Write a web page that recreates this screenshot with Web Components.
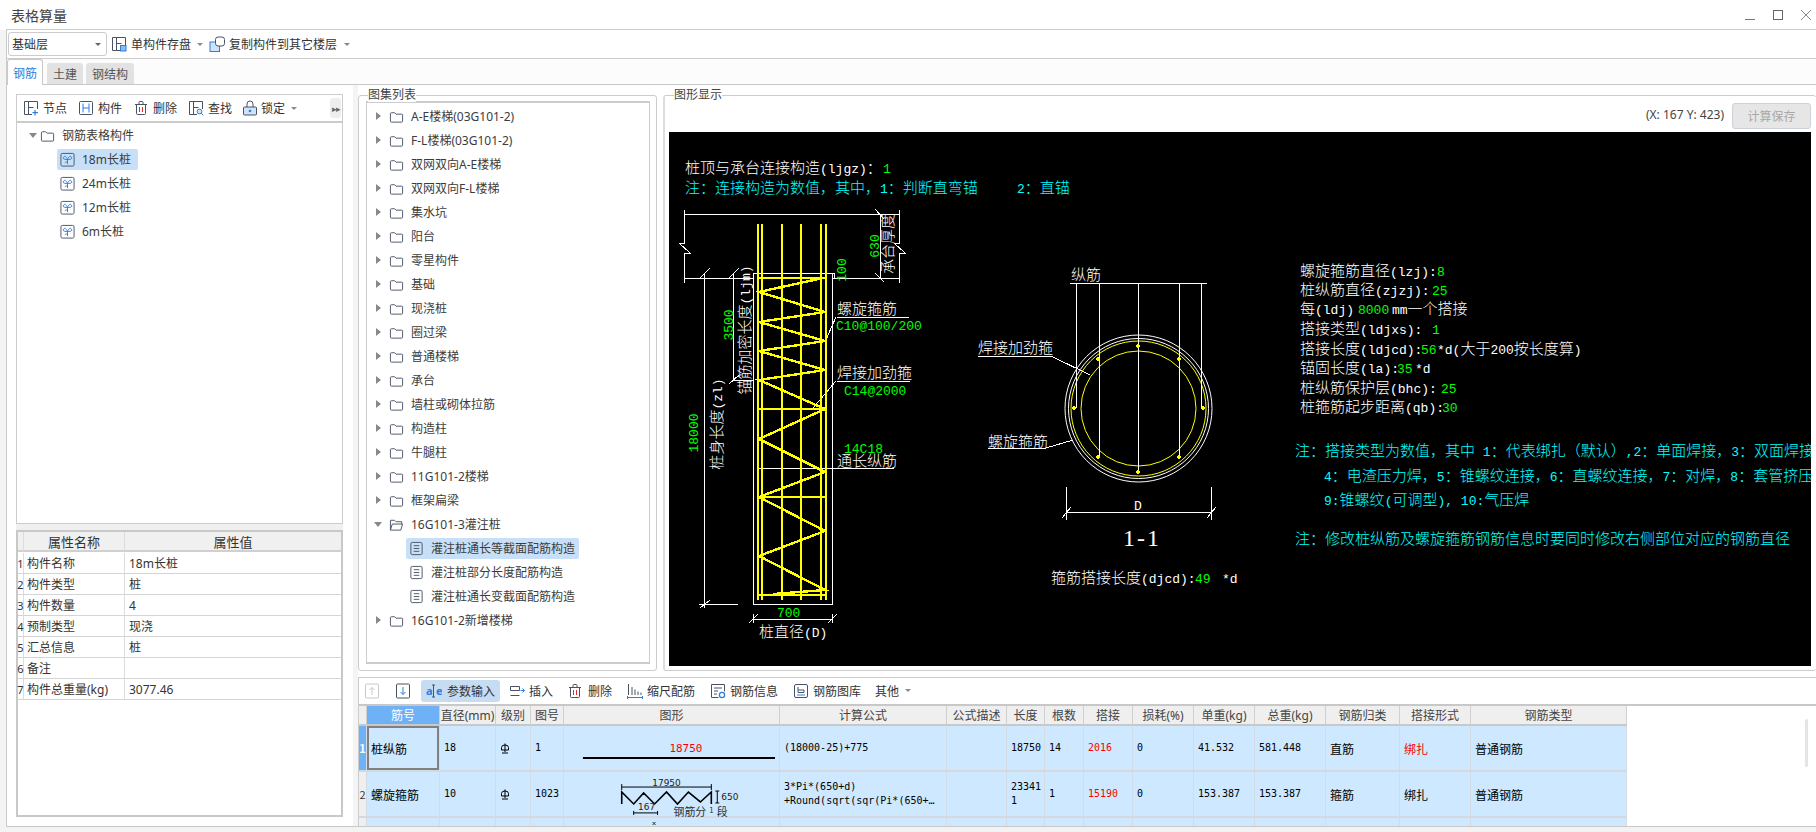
<!DOCTYPE html>
<html lang="zh-CN">
<head>
<meta charset="utf-8">
<title>表格算量</title>
<style>
  html, body { margin: 0; height: 100%; background: #fff; overflow: hidden; }
  body { font: 12px "Noto Sans", "Noto Sans CJK SC", sans-serif; color: #333; }
</style>
</head>
<body>
<app-shell>
  <title-bar slot="title">表格算量</title-bar>
  <floor-bar slot="floor"></floor-bar>
  <tab-strip slot="tabs"></tab-strip>
  <left-pane slot="left"></left-pane>
  <group-box slot="list" label="图集列表"><atlas-tree></atlas-tree></group-box>
  <group-box slot="graph" label="图形显示" flush><graph-view></graph-view></group-box>
  <rebar-panel slot="bottom"></rebar-panel>
</app-shell>

<script>
const DARK = '#4a5364';
const BLUE = '#2a7fe0';
const FRAME = `<path d="M9 14.5H1.5v-13h13V9" fill="none" stroke="${DARK}"/>`;

const ICONS = {
  node: `${FRAME}<path d="M5.5 1.5v13M5.5 7.5h5" stroke="${DARK}" fill="none"/><path d="M12 10v5.5M9.5 12.7h5.5" stroke="${BLUE}" stroke-width="1.2" fill="none"/>`,
  part: `<rect x="1.5" y="1.5" width="13" height="13" rx="1" fill="none" stroke="${DARK}"/><path d="M5 3.5v9M11 3.5v9M5 8h6" stroke="${BLUE}" fill="none"/>`,
  del: `<path d="M3.5 4.5v9a1 1 0 001 1h7a1 1 0 001-1v-9M2 4.5h12M6 4.5v-2a1 1 0 011-1h2a1 1 0 011 1v2" stroke="${DARK}" fill="none"/><path d="M6.5 7v5M9.5 7v5" stroke="#e02a2a" fill="none"/>`,
  find: `${FRAME}<path d="M5.5 1.5v13M5.5 7.5h5" stroke="${DARK}" fill="none"/><circle cx="11.5" cy="11.5" r="2.4" fill="#cfe3fa" stroke="${BLUE}"/><path d="M13.2 13.2l2 2" stroke="${BLUE}" fill="none"/>`,
  lock: `<path d="M5 7V4a3 3 0 016 0v3" fill="none" stroke="${DARK}"/><rect x="1.5" y="7" width="13" height="8" rx="1" fill="#cfe3fa" stroke="${DARK}"/><circle cx="8" cy="11" r="1.3" fill="${BLUE}"/>`,
  save: `${FRAME}<path d="M5.5 1.5v13M5.5 7.5h5" stroke="${DARK}" fill="none"/><rect x="9.5" y="9.5" width="5.5" height="5.5" fill="#8dbcf0" stroke="${BLUE}"/>`,
  copy: `<rect x="1" y="6" width="9.5" height="9.5" fill="#cfe3fa" stroke="${BLUE}"/><rect x="6.5" y="1" width="9" height="9" rx="2.5" fill="#fff" stroke="${DARK}"/>`,
  pile: `<rect x="1" y="1.5" width="14" height="13.5" rx="1.5" fill="none" stroke="${DARK}"/><path d="M8 8C6 8 3.5 8 3.5 6.3S6 3 8 8zM8 8c2 0 4.500 0 4.500-1.700S10 3 8 8zM8 8v5M8 10.500c-1 0-2.500 0-2.500 1.200" fill="none" stroke="${BLUE}"/>`,
  folder: `<path d="M1.500 5a1 1 0 011-1h3.500l1.500 1.500h6a1 1 0 011 1v6.500a1 1 0 01-1 1h-11a1 1 0 01-1-1z" fill="none" stroke="${DARK}"/>`,
  folderOpen: `<path d="M1.500 14v-10.500h4.500l1.500 1.500h6v2.500M1.500 14l2-6.500h11l-2 6.500z" fill="none" stroke="${DARK}"/>`,
  doc: `<rect x="2" y="1.500" width="12" height="13" rx="1.500" fill="none" stroke="${DARK}"/><path d="M5 5h6M5 8h6M5 11h6" stroke="${DARK}" fill="none"/>`,
  up: `<rect x="1.500" y="1" width="13" height="14" rx="1" fill="none" stroke="#c8c8c8"/><path d="M8 12V4.500M5.500 7L8 4.500 10.500 7" stroke="#c8c8c8" fill="none"/>`,
  down: `<rect x="1.500" y="1" width="13" height="14" rx="1" fill="none" stroke="${DARK}"/><path d="M8 4v7.500M5.500 9L8 11.500 10.500 9" stroke="${BLUE}" fill="none"/>`,
  param: `<text x="0" y="12" font-family="Noto Sans" font-weight="700" font-size="11" fill="${BLUE}">a</text><text x="10" y="12" font-family="Noto Sans" font-weight="700" font-size="11" fill="${BLUE}">e</text><path d="M6 2h3M6 14h3M7.500 2v12" stroke="${DARK}" fill="none"/>`,
  insert: `<path d="M1.500 3.500h9v4h-9zM1.500 12.500h9" fill="none" stroke="${DARK}"/><path d="M11.500 7.500h4M13.500 5.500l2 2-2 2" fill="none" stroke="${BLUE}"/>`,
  scale: `<path d="M1.500 1v11M5 4v8M8 6.500v5.500M11 8.500v3.500M14 9.500v2.500" fill="none" stroke="${DARK}"/><path d="M.5 14.500h15M.5 13v3M15.500 13v3" fill="none" stroke="${BLUE}"/>`,
  info: `<path d="M8.500 14.500H1.500v-13h13v7" fill="none" stroke="${DARK}"/><path d="M4 5h8M4 8h4M4 11h3" stroke="${DARK}" fill="none"/><circle cx="12" cy="12" r="2.600" fill="none" stroke="${BLUE}" stroke-width="1.300"/>`,
  lib: `<rect x="1.500" y="1.500" width="13" height="13" rx="1.500" fill="none" stroke="${DARK}"/><path d="M5 4v5.500h6V7H5" fill="none" stroke="${DARK}"/><path d="M4 12h8" stroke="${BLUE}" fill="none"/>`
};

class UiIcon extends HTMLElement {
  connectedCallback() {
    const size = this.getAttribute('size') || 16;
    this.attachShadow({ mode: 'open' }).innerHTML = `
      <style>:host { display: inline-flex; flex: none; } svg { display: block; }</style>
      <svg width="${size}" height="${size}" viewBox="0 0 16 16">${ICONS[this.getAttribute('name')] || ''}</svg>`;
  }
}
customElements.define('ui-icon', UiIcon);

class ToolBtn extends HTMLElement {
  connectedCallback() {
    const gap = this.getAttribute('gap') || 4;
    const caret = this.getAttribute('caret');
    this.attachShadow({ mode: 'open' }).innerHTML = `
      <style>
        :host { display: inline-flex; align-items: center; gap: ${gap}px; height: 22px; flex: none; border-radius: 3px; color: #333; white-space: nowrap; }
        :host([active]) { background: #c5dcf2; padding: 0 5px; }
        .caret { width: 0; height: 0; border: 3px solid transparent; border-top: 3px solid #8a8a8a; border-bottom: 0; margin-left: ${caret || 0}px; }
      </style>
      <ui-icon name="${this.getAttribute('icon')}"></ui-icon><slot></slot>
      ${caret ? '<span class="caret"></span>' : ''}`;
  }
}
customElements.define('tool-btn', ToolBtn);

class AppShell extends HTMLElement {
  constructor() {
    super();
    this.attachShadow({ mode: 'open' }).innerHTML = `
      <style>
        :host { display: flex; flex-direction: column; width: 1816px; height: 832px; overflow: hidden; background: #f3f3f3; }
        .framed { margin-left: 6px; display: flex; flex-direction: column; flex: none; background: #fff; border-left: 1px solid #ccc; }
        .body { height: 741px; display: flex; border-bottom: 1px solid #c8c8c8; background: #fff; }
        .left { width: 336px; box-sizing: border-box; padding-left: 9px; flex: none; }
        .gutter { width: 15px; flex: none; background: linear-gradient(90deg, #fff 65%, #f4f4f4 65%); }
        .right { flex: 1; min-width: 0; display: flex; flex-direction: column; background: #f7f7f7; }
        .top { height: 592px; display: flex; gap: 6px; padding-top: 10px; box-sizing: border-box; flex: none; background: #fff; }
        .list { width: 299px; flex: none; display: flex; padding-bottom: 6px; }
        .graph { flex: 1; min-width: 0; display: flex; padding-bottom: 6px; }
      </style>
      <slot name="title"></slot>
      <div class="framed">
        <slot name="floor"></slot>
        <slot name="tabs"></slot>
        <div class="body">
          <div class="left"><slot name="left"></slot></div>
          <div class="gutter"></div>
          <div class="right">
            <div class="top">
              <div class="list"><slot name="list"></slot></div>
              <div class="graph"><slot name="graph"></slot></div>
            </div>
            <slot name="bottom"></slot>
          </div>
        </div>
      </div>`;
  }
}
customElements.define('app-shell', AppShell);

class TitleBar extends HTMLElement {
  constructor() {
    super();
    this.attachShadow({ mode: 'open' }).innerHTML = `
      <style>
        :host { display: block; height: 30px; flex: none; background: #fff; }
        .bar { height: 29px; margin-left: 6px; border-bottom: 1px solid #ccc; display: flex; align-items: center; padding-left: 5px; font-size: 14px; color: #444; }
        .win { margin-left: auto; display: flex; gap: 18px; padding-right: 5px; align-items: center; }
        svg { display: block; }
      </style>
      <div class="bar"><slot></slot>
        <div class="win">
          <svg width="10" height="10" viewBox="0 0 10 10"><path d="M0 9.500h10" stroke="#777"/></svg>
          <svg width="10" height="10" viewBox="0 0 10 10"><rect x=".5" y=".5" width="9" height="9" fill="none" stroke="#666"/></svg>
          <svg width="10" height="10" viewBox="0 0 10 10"><path d="M0 0l10 10M10 0L0 10" stroke="#888"/></svg>
        </div>
      </div>`;
  }
}
customElements.define('title-bar', TitleBar);

class FloorBar extends HTMLElement {
  constructor() {
    super();
    this.attachShadow({ mode: 'open' }).innerHTML = `
      <style>
        :host { display: flex; align-items: center; height: 28px; flex: none; border-bottom: 1px solid #ccc; }
        .combo { width: 99px; height: 24px; box-sizing: border-box; margin-left: 1px; border: 1px solid #ccc; border-radius: 3px; display: flex; align-items: center; padding: 0 5px 0 3px; justify-content: space-between; }
        .combo i { width: 0; height: 0; border: 3px solid transparent; border-top: 3px solid #666; border-bottom: 0; }
        tool-btn:first-of-type { margin-left: 4px; }
        tool-btn + tool-btn { margin-left: 6px; }
      </style>
      <div class="combo">基础层<i></i></div>
      <tool-btn icon="save" caret="2">单构件存盘</tool-btn>
      <tool-btn icon="copy" caret="3">复制构件到其它楼层</tool-btn>`;
  }
}
customElements.define('floor-bar', FloorBar);

class TabStrip extends HTMLElement {
  constructor() {
    super();
    this.attachShadow({ mode: 'open' }).innerHTML = `
      <style>
        :host { display: flex; align-items: flex-end; height: 25px; flex: none; border-bottom: 1px solid #c8c8c8; background: #fcfcfc; }
        .tab { height: 21px; padding: 0 6px; background: #e2e2e2; border-radius: 3px 3px 0 0; display: flex; align-items: center; margin-left: 3px; color: #555; }
        .on { margin: 0 4px -1px 0; width: 36px; height: 26px; padding: 0; justify-content: center; box-sizing: border-box; background: #fff; border: 1px solid #c8c8c8; border-bottom: 0; color: #2a7fe0; }
      </style>
      <div class="tab on">钢筋</div>
      <div class="tab" style="margin-left:0">土建</div>
      <div class="tab">钢结构</div>`;
  }
}
customElements.define('tab-strip', TabStrip);

class TreeRow extends HTMLElement {
  connectedCallback() {
    const level = this.getAttribute('level') || 'root';
    const arrow = this.getAttribute('arrow');
    const icon = this.getAttribute('icon');
    this.attachShadow({ mode: 'open' }).innerHTML = `
      <style>
        :host { display: flex; align-items: center; height: 24px; white-space: nowrap; color: #3c3c3c; }
        .root { display: flex; align-items: center; padding-left: var(--root-pad, 12px); }
        .arrow { width: 8px; height: 8px; margin-right: var(--arrow-gap, 3px); display: flex; align-items: center; justify-content: center; }
        .r { border-left: 5px solid #888; border-top: 4px solid transparent; border-bottom: 4px solid transparent; }
        .d { border-top: 5px solid #888; border-left: 4px solid transparent; border-right: 4px solid transparent; }
        .child { margin-left: var(--child-pad, 40px); height: 21px; display: flex; align-items: center; gap: 7px; padding: 0 var(--pill-end, 7px) 0 var(--pill-pad, 3px); border-radius: 2px; }
        :host([selected]) .child { background: #c8dff8; }
        .t { margin-left: 7px; }
        .child .t { margin-left: 0; }
      </style>
      ${level === 'root'
        ? `<div class="root"><span class="arrow"><i class="${arrow}"></i></span><ui-icon name="${icon}" size="15"></ui-icon><span class="t"><slot></slot></span></div>`
        : `<div class="child"><ui-icon name="${icon}" size="15"></ui-icon><span class="t"><slot></slot></span></div>`}`;
  }
}
customElements.define('tree-row', TreeRow);

class LeftPane extends HTMLElement {
  constructor() {
    super();
    const props = [['构件名称', '18m长桩'], ['构件类型', '桩'], ['构件数量', '4'], ['预制类型', '现浇'], ['汇总信息', '桩'], ['备注', ''], ['构件总重量(kg)', '3077.46']];
    this.attachShadow({ mode: 'open' }).innerHTML = `
      <style>
        :host { display: flex; flex-direction: column; width: 327px; padding-top: 9px; height: 732px; box-sizing: border-box; }
        .tools { height: 27px; box-sizing: border-box; border: 1px solid #ccc; border-bottom: 0; display: flex; align-items: center; padding-left: 6px; }
        .tools tool-btn + tool-btn { margin-left: 11px; }
        .more { margin-left: auto; margin-right: 1px; width: 11px; height: 20px; background: #eee; border-radius: 3px; color: #666; font-size: 9px; display: flex; align-items: center; justify-content: center; letter-spacing: -1px; }
        .tree { height: 403px; box-sizing: border-box; border: 1px solid #ccc; border-top: 2px solid #ccc; }
        .gap { height: 6px; background: #f0f0f0; flex: none; }
        .props { height: 287px; box-sizing: border-box; border: 2px solid #c8c8c8; display: grid; grid-template-columns: 6px 101px 1fr; grid-auto-rows: 21px; align-content: start; }
        .props div { border-right: 1px solid #dcdcdc; border-bottom: 1px solid #d4d4d4; box-sizing: border-box; display: flex; align-items: center; padding-left: 3px; overflow: visible; white-space: nowrap; }
        .props .h { background: #f0f0f0; justify-content: center; font-size: 13px; padding: 0; height: 20px; border-bottom: 2px solid #d0d0d0; }
        .props .n { padding: 0; justify-content: center; font-size: 11px; }
        .props div:nth-child(3n+3) { padding-left: 4px; border-right: 0; }
        .props .h:nth-child(3) { padding: 0; }
      </style>
      <div class="tools">
        <tool-btn icon="node">节点</tool-btn>
        <tool-btn icon="part">构件</tool-btn>
        <tool-btn icon="del">删除</tool-btn>
        <tool-btn icon="find">查找</tool-btn>
        <tool-btn icon="lock" gap="3" caret="3" style="margin-left:10px">锁定</tool-btn>
        <span class="more">▸▸</span>
      </div>
      <div class="tree">
        <tree-row arrow="d" icon="folder">钢筋表格构件</tree-row>
        <tree-row level="child" icon="pile" selected>18m长桩</tree-row>
        <tree-row level="child" icon="pile">24m长桩</tree-row>
        <tree-row level="child" icon="pile">12m长桩</tree-row>
        <tree-row level="child" icon="pile">6m长桩</tree-row>
      </div>
      <div class="gap"></div>
      <div class="props">
        <div class="h"></div><div class="h">属性名称</div><div class="h">属性值</div>
        ${props.map((p, i) => `<div class="n">${i + 1}</div><div>${p[0]}</div><div>${p[1]}</div>`).join('')}
      </div>`;
  }
}
customElements.define('left-pane', LeftPane);

class GroupBox extends HTMLElement {
  connectedCallback() {
    this.attachShadow({ mode: 'open' }).innerHTML = `
      <style>
        :host { display: flex; flex: 1; min-width: 0; position: relative; box-sizing: border-box; border: 1px solid #ccc; border-radius: 3px; background: #fff; padding: 5px 6px 6px 7px; }
        :host([flush]) { padding: 0; border-right: 0; border-left-width: 2px; border-left-color: #ddd; }
        .legend { position: absolute; left: 9px; top: -8px; height: 14px; line-height: 14px; background: #fff; color: #444; }
      </style>
      <span class="legend">${this.getAttribute('label')}</span><slot></slot>`;
  }
}
customElements.define('group-box', GroupBox);

class AtlasTree extends HTMLElement {
  constructor() {
    super();
    const names = ['A-E楼梯(03G101-2)', 'F-L楼梯(03G101-2)', '双网双向A-E楼梯', '双网双向F-L楼梯', '集水坑', '阳台', '零星构件', '基础', '现浇桩', '圈过梁', '普通楼梯', '承台', '墙柱或砌体拉筋', '构造柱', '牛腿柱', '11G101-2楼梯', '框架扁梁'];
    this.attachShadow({ mode: 'open' }).innerHTML = `
      <style>
        :host { display: block; flex: 1; box-sizing: border-box; border: 1px solid #ccc; border-width: 2px 1px 2px 1px; padding-top: 1px; overflow: hidden; --root-pad: 7px; --arrow-gap: 7px; --child-pad: 39px; --pill-pad: 3px; --pill-end: 4px; }
      </style>
      ${names.map(n => `<tree-row arrow="r" icon="folder">${n}</tree-row>`).join('')}
      <tree-row arrow="d" icon="folderOpen">16G101-3灌注桩</tree-row>
      <tree-row level="child" icon="doc" selected>灌注桩通长等截面配筋构造</tree-row>
      <tree-row level="child" icon="doc">灌注桩部分长度配筋构造</tree-row>
      <tree-row level="child" icon="doc">灌注桩通长变截面配筋构造</tree-row>
      <tree-row arrow="r" icon="folder">16G101-2新增楼梯</tree-row>`;
  }
}
customElements.define('atlas-tree', AtlasTree);

// CAD text: CJK at 15px, ascii half width in a mono face
const W = '#ffffff', G = '#00ff00', C = '#00ffff', Y = '#ffff00';
function runs(str) {
  return str.match(/[\x00-\x7f]+|[^\x00-\x7f]+/g)
    .map(r => /^[\x00-\x7f]/.test(r) ? `<tspan class="a">${r}</tspan>` : `<tspan>${r}</tspan>`)
    .join('');
}
const tx = (x, cy, color, str) => `<text x="${x}" y="${cy + 5}" fill="${color}">${runs(str)}</text>`;
const rt = (cx, cy, color, str) => `<text x="${cx + 5}" y="${cy}" fill="${color}" text-anchor="middle" transform="rotate(-90 ${cx + 5} ${cy})">${runs(str)}</text>`;
const ln = (color, width, d) => `<path d="${d}" fill="none" stroke="${color}" stroke-width="${width}"/>`;

function pileDrawing() {
  const white = ln(W, 1, [
    'M684 214H899M684 210V243L679 243 690 253H684V283M684 278H753',
    'M899 210V243H894L905 253H899V283M832 278H899M880 214V278',
    'M875 209L884 219M875 273L884 282',
    'M753 273H832V604H753V273M832 273H834V278',
    'M704 274V608M700 278L710 268M700 608L710 600M699 604H738',
    'M733 273V380M729 278L739 268M729 384L739 375M733 380H753',
    'M753 619H832M749 623L758 614M828 623L837 614M753 614V623M832 614V623',
    'M837 317H909M836 317L825 342M837 381H910M836 381L813 408M757 468H894'
  ].join(''));
  const rebar = ln(Y, 2.5, [
    'M758 224V600M762 224V600M782 224V600M801 224V600M821 224V600M826 224V600',
    'M758 278H826M758 409H826M758 497H826M758 595H826'
  ].join(''));
  const spiral = ln(Y, 2.4, 'M823 278L759 292L825 312L759 322L825 341L759 351L825 370L759 380L825 409L759 439L825 472L759 497L825 531L759 556L825 590L773 594');
  return white + rebar + spiral + [
    rt(874, 246, G, '630'), rt(888, 244, W, '承台厚度'), rt(841, 270, G, '100'),
    rt(728, 325, G, '3500'), rt(745, 330, W, '锚筋加密长度(ljm)'),
    rt(693, 433, G, '18000'), rt(717, 424, W, '桩身长度(zl)'),
    tx(837, 309, W, '螺旋箍筋'), tx(836, 325, G, 'C10@100/200'),
    tx(837, 373, W, '焊接加劲箍'), tx(844, 390, G, 'C14@2000'),
    tx(844, 448, G, '14C18'), tx(837, 461, W, '通长纵筋'),
    tx(777, 612, G, '700'), tx(759, 632, W, '桩直径(D)')
  ].join('');
}

function sectionDrawing() {
  const cx = 1138.5, cy = 408.5;
  const dots = [[1138, 346], [1098, 359], [1074, 408], [1098, 457], [1138, 472], [1179, 457], [1203, 408], [1179, 359]]
    .map(d => `<rect x="${d[0] - 2}" y="${d[1] - 2}" width="4" height="4" fill="${Y}" transform="rotate(45 ${d[0]} ${d[1]})"/>`).join('');
  const circles = [[73.5, W], [70, W], [67.5, Y], [57.5, Y]]
    .map(c => `<circle cx="${cx}" cy="${cy}" r="${c[0]}" fill="none" stroke="${c[1]}" shape-rendering="auto"/>`).join('');
  const lines = ln(W, 1, [
    'M1070 283H1207M1076 283V408M1099 283V457M1138 283V472M1179 283V457M1201 283V408',
    'M978 356H1051L1090 375M988 448H1046L1073 440',
    'M1066 487V520M1211 487V520M1066 512H1211M1062 518L1071 507M1207 518L1216 507'
  ].join(''));
  return circles + lines + dots + [
    tx(1071, 275, W, '纵筋'), tx(978, 348, W, '焊接加劲箍'), tx(988, 442, W, '螺旋箍筋'),
    tx(1134, 505, W, 'D'),
    `<text x="1123" y="546" fill="${W}" style="font-family:'Liberation Serif',serif;font-size:24px;font-weight:400;letter-spacing:2px">1-1</text>`,
    tx(1051, 578, W, '箍筋搭接长度(djcd):'), tx(1195, 578, G, '49'), tx(1222, 578, W, '*d')
  ].join('');
}

function notesDrawing() {
  return [
    tx(685, 168, W, '桩顶与承台连接构造(ljgz)：'), tx(883, 168, G, '1'),
    tx(685, 188, C, '注：连接构造为数值，其中，1：判断直弯锚'), tx(1017, 188, C, '2：直锚'),
    tx(1300, 271, W, '螺旋箍筋直径(lzj):'), tx(1437, 271, G, '8'),
    tx(1300, 290, W, '桩纵筋直径(zjzj):'), tx(1432, 290, G, '25'),
    tx(1300, 309, W, '每(ldj)'), tx(1358, 309, G, '8000'), tx(1392, 309, W, 'mm一个搭接'),
    tx(1300, 329, W, '搭接类型(ldjxs):'), tx(1432, 329, G, '1'),
    tx(1300, 349, W, '搭接长度(ldjcd):'), tx(1421, 349, G, '56'), tx(1437, 349, W, '*d(大于200按长度算)'),
    tx(1300, 368, W, '锚固长度(la):'), tx(1397, 368, G, '35'), tx(1415, 368, W, '*d'),
    tx(1300, 388, W, '桩纵筋保护层(bhc):'), tx(1441, 388, G, '25'),
    tx(1300, 407, W, '桩箍筋起步距离(qb):'), tx(1442, 407, G, '30'),
    tx(1295, 451, C, '注：搭接类型为数值，其中 1：代表绑扎（默认）,2：单面焊接，3：双面焊接，'),
    tx(1324, 476, C, '4：电渣压力焊，5：锥螺纹连接，6：直螺纹连接，7：对焊，8：套管挤压'),
    tx(1324, 500, C, '9:锥螺纹(可调型), 10:气压焊'),
    tx(1295, 539, C, '注：修改桩纵筋及螺旋箍筋钢筋信息时要同时修改右侧部位对应的钢筋直径')
  ].join('');
}

class GraphView extends HTMLElement {
  constructor() {
    super();
    this.attachShadow({ mode: 'open' }).innerHTML = `
      <style>
        :host { display: flex; flex-direction: column; flex: 1; min-width: 0; padding-left: 4px; }
        .head { height: 36px; flex: none; display: flex; align-items: center; justify-content: flex-end; gap: 8px; padding-right: 5px; color: #444; }
        button { width: 79px; height: 26px; margin-top: 4px; background: #e6e6e6; border: 1px solid #ccd2da; border-radius: 3px; color: #a8a8a8; font: inherit; padding: 0; }
        svg { display: block; background: #000; shape-rendering: crispEdges; }
        text { font-family: "Noto Sans CJK SC", sans-serif; font-size: 15px; font-weight: 300; white-space: pre; }
        .a { font-family: "Liberation Mono", monospace; font-size: 13px; font-weight: 400; }
      </style>
      <div class="head"><span>(X: 167 Y: 423)</span><button>计算保存</button></div>
      <svg width="1142" height="534" viewBox="669 132 1142 534">${notesDrawing()}${pileDrawing()}${sectionDrawing()}</svg>`;
  }
}
customElements.define('graph-view', GraphView);

const GRADE = '<svg width="10" height="11" viewBox="0 0 10 11"><path d="M1.500 7V4.500a3.500 2.500 0 017 0V7H1.500M5 .5v8.500M2 10h6" fill="none" stroke="#000"/></svg>';
const LINE_SHAPE = `<svg width="216" height="46" viewBox="563 726 216 46">
  <text x="685.500" y="752" text-anchor="middle" fill="#f00" font-family="DejaVu Sans Mono" font-size="11">18750</text>
  <path d="M582 758H775" stroke="#000" stroke-width="2"/></svg>`;
const ZIG_SHAPE = `<svg width="216" height="46" viewBox="563 772 216 46" font-family="DejaVu Sans" font-size="9">
  <path d="M621 784V790M711 784V790M621 787H711" stroke="#000" fill="none"/>
  <text x="666" y="786" text-anchor="middle" fill="#222">17950</text>
  <path d="M621 804V792L633 804 643 793 654 804 666 792 677 804 688 792 700 802 711 792V804" stroke="#000" stroke-width="1.600" fill="none"/>
  <path d="M715 791H719M717 791V803M715 803H719" stroke="#000" fill="none"/>
  <text x="721" y="800" fill="#222">650</text>
  <path d="M633 811V815M657 811V815M633 813H657" stroke="#000" fill="none"/>
  <text x="646" y="810" text-anchor="middle" fill="#222">167</text>
  <text x="673" y="816" fill="#333" font-family="Noto Sans CJK SC" font-size="11">钢筋分<tspan font-size="8" dy="-3" dx="3">1</tspan><tspan dy="3" dx="3">段</tspan></text></svg>`;
const NEXT_SHAPE = `<svg width="216" height="8" viewBox="563 818 216 8"><path d="M652 822l3 3M655 822l-3 3" stroke="#333" fill="none"/></svg>`;

class RebarGrid extends HTMLElement {
  constructor() {
    super();
    const cols = [8, 73, 56, 35, 33, 216, 167, 60, 38, 39, 49, 61, 61, 71, 74, 71, 156];
    const head = ['', '筋号', '直径(mm)', '级别', '图号', '图形', '计算公式', '公式描述', '长度', '根数', '搭接', '损耗(%)', '单重(kg)', '总重(kg)', '钢筋归类', '搭接形式', '钢筋类型'];
    const m = s => `<span class="m">${s}</span>`;
    const r = s => `<span class="m red">${s}</span>`;
    const rows = [
      ['1', '桩纵筋', m('18'), GRADE, m('1'), LINE_SHAPE, m('(18000-25)+775'), '', m('18750'), m('14'), r('2016'), m('0'), m('41.532'), m('581.448'), '直筋', '<span class="red">绑扎</span>', '普通钢筋'],
      ['2', '螺旋箍筋', m('10'), GRADE, m('1023'), ZIG_SHAPE, m('3*Pi*(650+d)<br>+Round(sqrt(sqr(Pi*(650+…'), '', m('23341<br>1'), m('1'), r('15190'), m('0'), m('153.387'), m('153.387'), '箍筋', '绑扎', '普通钢筋'],
      ['', '', '', '', '', NEXT_SHAPE, '', '', '', '', '', '', '', '', '', '', '']
    ];
    const headHtml = head.map((h, i) => `<div class="h${i === 1 ? ' sel' : ''}">${h}</div>`).join('');
    const bodyHtml = rows.map((row, ri) => row.map((c, i) => {
      let cls = 'c';
      if (i === 0) cls += ' n' + (ri === 0 ? ' cur' : '');
      if (i === 1 && ri === 0) cls += ' focus';
      if (i === 5) cls += ' shape';
      return `<div class="${cls}">${c}</div>`;
    }).join('')).join('');
    this.attachShadow({ mode: 'open' }).innerHTML = `
      <style>
        :host { display: block; height: 120px; overflow: hidden; background: #fff; }
        .grid { display: grid; grid-template-columns: ${cols.map(c => c + 'px').join(' ')}; grid-template-rows: 20px 46px 46px 46px; width: max-content; color: #000; font-family: "Noto Sans CJK SC", sans-serif; }
        .h { background: #efefef; border-right: 1px solid #d0d0d0; border-bottom: 2px solid #c8c8c8; box-sizing: border-box; display: flex; align-items: center; justify-content: center; color: #444; font-family: "Noto Sans", "Noto Sans CJK SC", sans-serif; white-space: nowrap; }
        .h.sel { background: #6fb1f7; color: #fff; }
        .c { background: #cde8ff; border-right: 1px solid #d3dce4; border-bottom: 2px solid #d3d9de; box-sizing: border-box; display: flex; align-items: center; padding-left: 4px; white-space: nowrap; }
        .n { padding: 0; justify-content: center; background: #efefef; color: #333; font-size: 11px; }
        .n.cur { background: #6fb1f7; color: #fff; font-weight: 700; }
        .focus { box-shadow: inset 0 0 0 2px #808080; }
        .shape { padding: 0; align-items: flex-start; }
        .shape svg { display: block; }
        .m { font: 10px/14px "DejaVu Sans Mono", monospace; }
        .red { color: #f00; }
      </style>
      <div class="grid">${headHtml}${bodyHtml}</div>`;
  }
}
customElements.define('rebar-grid', RebarGrid);

class RebarPanel extends HTMLElement {
  constructor() {
    super();
    this.attachShadow({ mode: 'open' }).innerHTML = `
      <style>
        :host { display: block; position: relative; flex: 1; background: #fff; border-top: 1px solid #ccc; border-left: 1px solid #ccc; box-sizing: border-box; }
        .tools { height: 28px; box-sizing: border-box; display: flex; align-items: center; border-bottom: 2px solid #c8c8c8; padding-bottom: 1px; }
        .scroll { position: absolute; right: 8px; top: 41px; width: 3px; height: 48px; background: #e4e4e4; border-radius: 2px; }
      </style>
      <div class="tools">
        <tool-btn icon="up" style="margin-left:5px"></tool-btn>
        <tool-btn icon="down" style="margin-left:15px"></tool-btn>
        <tool-btn icon="param" gap="5" active style="margin-left:10px">参数输入</tool-btn>
        <tool-btn icon="insert" style="margin-left:9px">插入</tool-btn>
        <tool-btn icon="del" gap="5" style="margin-left:14px">删除</tool-btn>
        <tool-btn icon="scale" style="margin-left:15px">缩尺配筋</tool-btn>
        <tool-btn icon="info" style="margin-left:15px">钢筋信息</tool-btn>
        <tool-btn icon="lib" style="margin-left:15px">钢筋图库</tool-btn>
        <span style="margin-left:14px;color:#333">其他</span>
        <span style="margin-left:6px;width:0;height:0;border:3px solid transparent;border-top-color:#8a8a8a;border-bottom:0"></span>
      </div>
      <rebar-grid></rebar-grid>
      <div class="scroll"></div>`;
  }
}
customElements.define('rebar-panel', RebarPanel);
</script>
</body>
</html>
